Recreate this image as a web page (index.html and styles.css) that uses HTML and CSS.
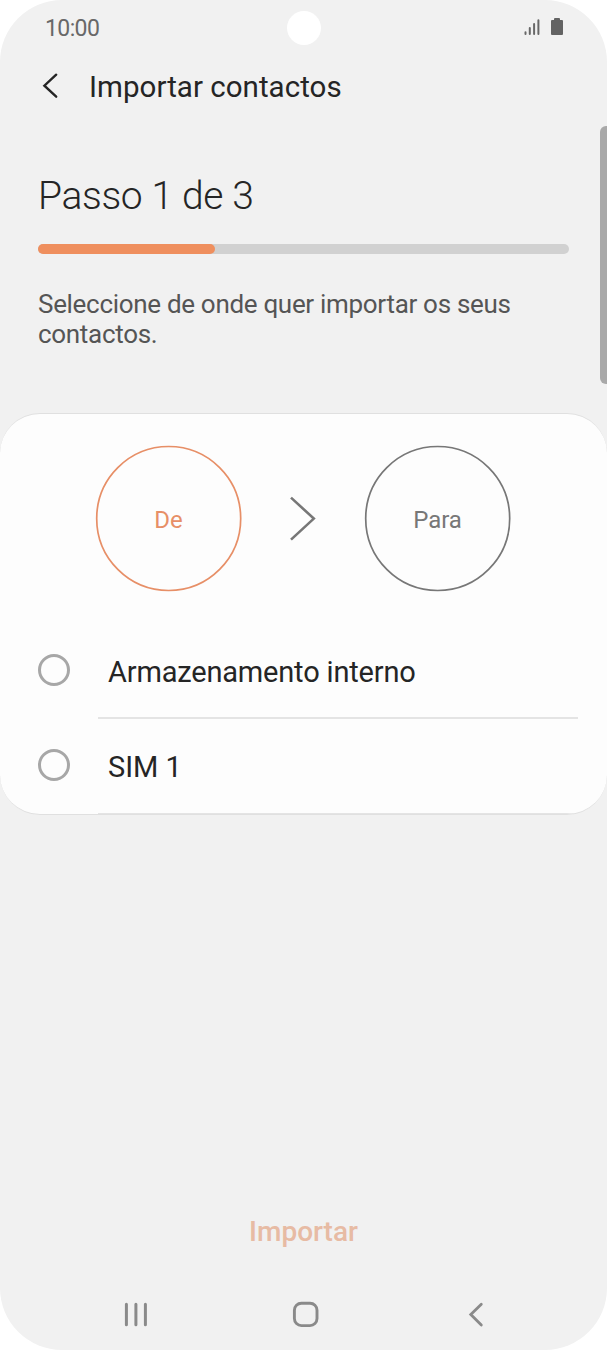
FILE: index.html
```html
<!DOCTYPE html>
<html lang="pt">
<head>
<meta charset="utf-8">
<title>Importar contactos</title>
<link rel="stylesheet" href="styles.css">
</head>
<body>
<main class="screen">
  <header class="status">
    <span class="time">10:00</span>
    <span class="camera"></span>
    <svg class="status-icons" width="42" height="22" viewBox="0 0 42 22">
      <g stroke="#686868" stroke-width="2" stroke-linecap="round"><path d="M3.5 15.2v1.8M7.8 11v6M12.1 7v10M16.4 3.2V17"/></g>
      <path fill="#636363" d="M32 2q0-1 1-1h4q1 0 1 1v1h2q1 0 1 1v13q0 1-1 1H30q-1 0-1-1V4q0-1 1-1h2z"/>
    </svg>
  </header>
  <div class="appbar">
    <svg class="back" width="20" height="30" viewBox="0 0 20 30" fill="none" stroke="#252525" stroke-width="2.4" stroke-linecap="round" stroke-linejoin="miter"><path d="M16.2 2.7 4.4 13.7l11.8 11"/></svg>
    <h1 class="title">Importar contactos</h1>
  </div>
  <section class="intro">
    <h2 class="step">Passo 1 de 3</h2>
    <div class="progress"><div class="bar"></div></div>
    <p class="desc">Seleccione de onde quer importar os seus<br>contactos.</p>
  </section>
  <section class="card">
    <div class="flow">
      <div class="circle from"><svg class="ring" viewBox="0 0 146 146"><circle cx="72.7" cy="72.5" r="72"/></svg><span class="label">De</span></div>
      <svg class="arrow" width="28" height="46" viewBox="0 0 28 46" fill="none" stroke="#777" stroke-width="2.6"><path d="M1 1.6 23.8 22.6 1 43.6"/></svg>
      <div class="circle to"><svg class="ring" viewBox="0 0 146 146"><circle cx="72.7" cy="72.5" r="72"/></svg><span class="label">Para</span></div>
    </div>
    <div class="option"><span class="radio"></span><div class="option-body"><span class="name internal">Armazenamento interno</span></div></div>
    <div class="option last"><span class="radio"></span><div class="option-body"><span class="name">SIM 1</span></div></div>
  </section>
  <footer class="footer">
    <span class="import">Importar</span>
    <nav class="nav">
      <svg width="26" height="28" viewBox="0 0 26 28" stroke="#8a8a8a" stroke-width="3" stroke-linecap="round"><path d="M3.4 4.2v20.5M12.9 4.2v20.5M22.4 4.2v20.5"/></svg>
      <svg class="home" width="28" height="28" viewBox="0 0 28 28" fill="none" stroke="#8a8a8a" stroke-width="2.9"><rect x="2.4" y="3.2" width="22.6" height="22.4" rx="7"/></svg>
      <svg width="20" height="28" viewBox="0 0 20 28" fill="none" stroke="#8a8a8a" stroke-width="2.8" stroke-linecap="round"><path d="M15.3 4.2 4.8 14.6l10.5 10.4"/></svg>
    </nav>
  </footer>
  <div class="scrollbar"></div>
</main>
</body>
</html>
```
FILE: styles.css
```css
* { box-sizing: border-box; }
body { margin: 0; background: #fff; font-family: Roboto, sans-serif; }
.screen { position: relative; display: flex; flex-direction: column; width: 607px; height: 1350px; background: #f1f1f1; border-radius: 62px; overflow: hidden; }
h1, h2, p { margin: 0; font-weight: 400; }
.status { display: grid; grid-template-columns: 1fr 34px 1fr; align-items: center; height: 56px; padding: 0 43px 0 45px; }
.time { padding-top: 1px; font-size: 23px; line-height: 28px; letter-spacing: -.6px; color: #686868; }
.camera { width: 34px; height: 34px; margin-left: -1px; border-radius: 50%; background: #fff; }
.status-icons { justify-self: end; }
.appbar { display: flex; align-items: center; height: 62px; padding-left: 40px; }
.back { display: block; }
.title { margin-left: 29px; font-size: 29.5px; line-height: 34px; letter-spacing: .03px; color: #252525; }
.intro { height: 295px; padding: 54px 38px 0; }
.step { font-size: 39px; line-height: 48px; font-weight: 300; letter-spacing: -.35px; color: #252525; }
.progress { height: 10px; margin-top: 24px; border-radius: 5px; background: #d1d1d1; }
.bar { width: 177px; height: 10px; border-radius: 5px; background: #ef8f5e; }
.desc { margin-top: 35px; font-size: 26px; line-height: 30px; letter-spacing: -.31px; color: #555; white-space: nowrap; }
.card { height: 402px; border: solid #e0e0e0; border-width: 1px 0; border-radius: 40px; background: #fdfdfd; overflow: hidden; }
.flow { display: flex; align-items: center; height: 209px; padding: 1px 0 0 95.5px; }
.circle { display: grid; width: 146px; height: 146px; font-size: 24px; }
.ring { grid-area: 1 / 1; width: 146px; height: 146px; overflow: visible; fill: none; stroke: currentColor; stroke-width: 1.7; }
.label { grid-area: 1 / 1; place-self: center; padding-top: 2px; letter-spacing: -.1px; }
.from { color: #e78f67; }
.to { color: #777; }
.arrow { margin: 0 47px 0 48px; }
.option { display: flex; height: 96px; padding: 0 29px 0 38px; }
.radio { width: 32px; height: 32px; margin-top: 31px; border: 3px solid #a7a7a7; border-radius: 50%; }
.option-body { flex: 1; margin-left: 28px; padding: 32px 0 0 10px; border-bottom: 2px solid #e4e4e4; }
.last { height: 95px; }
.last .radio { margin-top: 30px; }
.last .option-body { padding-top: 31px; border-bottom-width: 1px; }
.name { font-size: 29px; line-height: 34px; color: #252525; }
.internal { letter-spacing: -.18px; }
.footer { display: flex; flex-direction: column; align-items: center; margin-top: 399px; }
.import { font-size: 28px; line-height: 36px; font-weight: 500; color: #e7bba4; }
.nav { display: flex; justify-content: space-between; align-self: stretch; margin-top: 50px; padding: 0 121px 0 123px; }
.home { margin-left: -4px; }
.scrollbar { position: absolute; top: 126px; right: -6px; width: 13px; height: 258px; border-radius: 6px; background: #a9a9a9; }
```
